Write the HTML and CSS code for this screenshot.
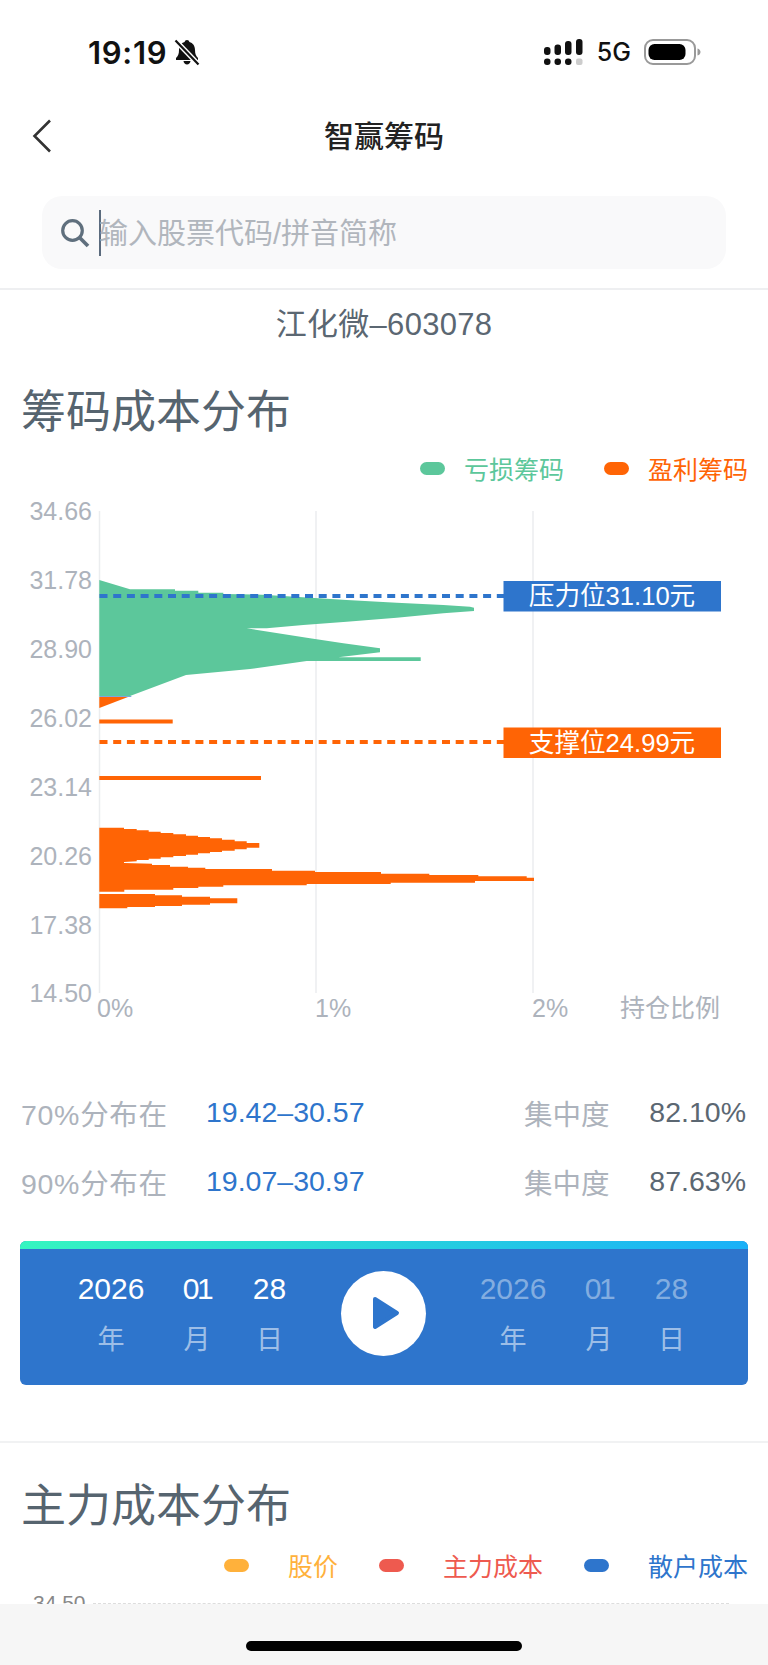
FILE: index.html
```html
<!DOCTYPE html>
<html lang="zh-CN">
<head>
    <meta charset="UTF-8">
    <meta name="viewport" content="width=device-width, initial-scale=1.0">
    <title>智赢筹码</title>
    <link rel="stylesheet" href="styles.css">
</head>
<body>
    <div class="status-bar">
        <div class="status-left">
            <span class="clock">19:19</span>
            <svg class="bell" width="26" height="27" viewBox="0 0 26 27">
                <path d="M13 1c1.3 0 2.2.9 2.4 2.1 3.6 1 5.6 4 5.6 7.9 0 4 1 6 3 8v2H2v-2c2-2 3-4 3-8 0-3.900 2-6.900 5.600-7.900C10.800 1.900 11.700 1 13 1z" fill="#111"/>
                <path d="M9.500 22h7c-.3 2-1.700 3.500-3.500 3.500S9.800 24 9.500 22z" fill="#111"/>
                <path d="M2 2l22 23" stroke="#fff" stroke-width="5"/>
                <path d="M1.500 1.500l23 24" stroke="#111" stroke-width="2.200"/>
            </svg>
        </div>
        <div class="status-right">
            <svg width="40" height="28" viewBox="0 0 40 28">
                <rect x="1" y="9" width="6.500" height="8" rx="3" fill="#111"/>
                <rect x="11.500" y="6.500" width="6.500" height="10.500" rx="3" fill="#111"/>
                <rect x="22" y="3" width="6.500" height="14" rx="3" fill="#111"/>
                <rect x="33" y="1" width="6.500" height="16" rx="3" fill="#111"/>
                <rect x="1" y="20.500" width="6.500" height="6.500" rx="3" fill="#111"/>
                <rect x="11.500" y="20.500" width="6.500" height="6.500" rx="3" fill="#111"/>
                <rect x="22" y="20.500" width="6.500" height="6.500" rx="3" fill="#111"/>
                <rect x="33" y="20.500" width="6.500" height="6.500" rx="2" fill="#ccc"/>
            </svg>
            <span class="network">5G</span>
            <svg width="57" height="26" viewBox="0 0 57 26">
                <rect x="1" y="1" width="50" height="24" rx="8" fill="none" stroke="#999" stroke-width="2"/>
                <rect x="4.500" y="5" width="37" height="16" rx="6" fill="#000"/>
                <path d="M53.500 9.500c2 .5 3 2 3 3.500s-1 3-3 3.500z" fill="#999"/>
            </svg>
        </div>
    </div>

    <div class="nav-bar">
        <svg class="back" width="20" height="34" viewBox="0 0 20 34">
            <path d="M18 1.500L2.500 17 18 32.500" fill="none" stroke="#333" stroke-width="2.600"/>
        </svg>
        <h1>智赢筹码</h1>
    </div>

    <div class="search-wrap">
        <div class="search-box">
            <svg class="search-icon" width="30" height="30" viewBox="0 0 30 30">
                <circle cx="12.500" cy="12.500" r="9.800" fill="none" stroke="#5f6f7d" stroke-width="3.200"/>
                <path d="M20 20l8 8" stroke="#5f6f7d" stroke-width="3.800"/>
            </svg>
            <span class="cursor"></span>
            <span class="placeholder">输入股票代码/拼音简称</span>
        </div>
    </div>

    <div class="content">
        <div class="stock-name">江化微–603078</div>

        <h2 class="section-title">筹码成本分布</h2>
        <div class="legend legend-chips">
            <span class="swatch green-bg"></span><span class="green-text">亏损筹码</span>
            <span class="swatch orange-bg"></span><span class="orange-text">盈利筹码</span>
        </div>

        <svg class="chip-chart" width="768" height="540" viewBox="0 490 768 540">
            <line class="grid" x1="99.500" y1="511" x2="99.500" y2="993"/>
            <line class="grid" x1="316" y1="511" x2="316" y2="993"/>
            <line class="grid" x1="533" y1="511" x2="533" y2="993"/>

            <text class="tick" x="92" y="520">34.66</text>
            <text class="tick" x="92" y="589">31.78</text>
            <text class="tick" x="92" y="658">28.90</text>
            <text class="tick" x="92" y="727">26.02</text>
            <text class="tick" x="92" y="796">23.14</text>
            <text class="tick" x="92" y="865">20.26</text>
            <text class="tick" x="92" y="933.500">17.38</text>
            <text class="tick" x="92" y="1002">14.50</text>

            <text class="tick-x" x="97" y="1017">0%</text>
            <text class="tick-x" x="315" y="1017">1%</text>
            <text class="tick-x" x="532" y="1017">2%</text>
            <text class="tick" x="720" y="1017">持仓比例</text>

            <!-- 亏损 -->
            <polygon class="green-fill" points="99.300,580 130,589.300 175,589.300 175,590.700 198.300,590.700 198.300,592.700 223.300,592.700 223.300,594 263,594.700 303,597.300 346.700,600 396.700,602.700 443.300,605 470,606.700 474,607.700 474,611 443.300,613.300 396.700,617.700 346.700,621.700 303.300,625 266.700,628.300 246.700,628.300 310,638.300 343.300,643.300 380,648.300 380,652.300 338.300,657.300 420.700,657.300 420.700,661 306.700,661 250,669 186,675 130,696 99.300,696"/>
            <rect x="99.300" y="696" width="32" height="1" fill="#7fa6dd"/>

            <!-- 盈利 -->
            <polygon class="orange-fill" points="99.300,697 128,697 99.300,708"/>
            <rect class="orange-fill" x="99.300" y="719.500" width="73.400" height="4"/>
            <rect class="orange-fill" x="99.300" y="776" width="161.700" height="4"/>
            <polygon class="orange-fill" points="99.300,827.700 124,827.700 124,829 136.700,829 136.700,830.300 148.700,830.300 148.700,831.700 160.700,831.700 160.700,833 173.300,833 173.300,834.300 186,834.300 186,835.700 198,835.700 198,837 210,837 210,838.300 222,838.300 222,839.700 234.700,839.700 234.700,841.300 246.700,841.300 246.700,843 259.300,843 259.300,847.700 246.700,847.700 246.700,849.300 234.700,849.300 234.700,850.700 222,850.700 222,852 210,852 210,853.300 198,853.300 198,854.700 186,854.700 186,856 173.300,856 173.300,857.300 160.700,857.300 160.700,858.700 148.700,858.700 148.700,860 136.700,860 136.700,861.300 124,862 124,863 152,863.700 152,865 170,865 170,866.700 188,866.700 188,867.700 205.300,867.700 205.300,869 272,869 272,870.700 315,870.700 315,872 381,872 381,873.700 429.300,873.700 429.300,875 478.300,875 478.300,876.300 526.700,876.300 526.700,877.700 534,877.700 534,881 475,881 475,882.700 390.700,882.700 390.700,884 306.700,884 306.700,885.300 223.300,885.300 223.300,886.700 198.300,886.700 198.300,888 173.300,888 173.300,889.700 124.300,889.700 124.300,891.700 99.300,891.700"/>
            <polygon class="orange-fill" points="99.300,894 155,894 155,895.300 182,895.300 182,896.700 210,896.700 210,898.300 237.300,898.300 237.300,903.300 210,903.300 210,904.700 182,904.700 182,906 155,906 155,907 127.300,907 127.300,908.300 99.300,908.300"/>

            <!-- 压力位 / 支撑位 -->
            <line class="dash dash-blue" x1="99.500" y1="596" x2="504" y2="596"/>
            <rect class="blue-fill" x="503.500" y="581" width="217.500" height="30.500"/>
            <text class="mark" x="612" y="605">压力位31.10元</text>
            <line class="dash dash-orange" x1="99.500" y1="742" x2="504" y2="742"/>
            <rect class="orange-fill" x="503.500" y="727.500" width="217.500" height="30.500"/>
            <text class="mark" x="612" y="751.500">支撑位24.99元</text>
        </svg>

        <div class="stats">
            <div class="stat-row">
                <span class="stat-label stat-dist">70%分布在</span>
                <span class="stat-range">19.42–30.57</span>
                <span class="stat-label stat-name">集中度</span>
                <span class="stat-value">82.10%</span>
            </div>
            <div class="stat-row">
                <span class="stat-label stat-dist">90%分布在</span>
                <span class="stat-range">19.07–30.97</span>
                <span class="stat-label stat-name">集中度</span>
                <span class="stat-value">87.63%</span>
            </div>
        </div>

        <div class="player">
            <div class="player-strip"></div>
            <div class="player-body">
                <div class="date-group">
                    <span class="num">2026</span><span class="num month">01</span><span class="num">28</span>
                    <span class="unit">年</span><span class="unit">月</span><span class="unit">日</span>
                </div>
                <div class="play-btn">
                    <svg width="28" height="34" viewBox="0 0 28 34">
                        <path d="M3 3l22 14L3 31z" fill="#2e75cc" stroke="#2e75cc" stroke-width="4" stroke-linejoin="round"/>
                    </svg>
                </div>
                <div class="date-group date-end">
                    <span class="num">2026</span><span class="num month">01</span><span class="num">28</span>
                    <span class="unit">年</span><span class="unit">月</span><span class="unit">日</span>
                </div>
            </div>
        </div>

        <div class="section-line"></div>

        <h2 class="section-title title-main">主力成本分布</h2>
        <div class="legend legend-main">
            <span class="swatch yellow-bg"></span><span class="yellow-text">股价</span>
            <span class="swatch red-bg"></span><span class="red-text">主力成本</span>
            <span class="swatch blue-bg"></span><span class="blue-text">散户成本</span>
        </div>
        <div class="main-chart-top">
            <span class="main-tick">34.50</span>
            <span class="main-line"></span>
        </div>
    </div>

    <div class="home-bar"><span class="home-indicator"></span></div>
</body>
</html>
```

FILE: styles.css
```css
* {
    box-sizing: border-box;
}

html, body {
    margin: 0;
    padding: 0;
}

body {
    width: 768px;
    height: 1665px;
    overflow: hidden;
    background: #fff;
    display: flex;
    flex-direction: column;
    font-family: "Liberation Sans", "Noto Sans CJK SC", sans-serif;
}

h1, h2 {
    margin: 0;
    font-weight: normal;
}

/* 状态栏 */
.status-bar {
    height: 104px;
    flex: none;
    display: flex;
    justify-content: space-between;
    align-items: center;
    padding: 0 67px 0 88px;
}

.status-left, .status-right {
    display: flex;
    align-items: center;
}

.clock {
    font-family: Inter, sans-serif;
    font-size: 31px;
    font-weight: 600;
    color: #111;
    letter-spacing: 0.7px;
}

.bell {
    margin-left: 7px;
}

.network {
    font-family: Inter, sans-serif;
    font-size: 25px;
    font-weight: 500;
    color: #111;
    margin: 0 13px 0 14px;
}

/* 导航 */
.nav-bar {
    height: 64px;
    flex: none;
    position: relative;
    display: flex;
    align-items: center;
    justify-content: center;
    padding-bottom: 4px;
}

.nav-bar h1 {
    font-size: 30px;
    font-weight: 500;
    color: #222;
}

.back {
    position: absolute;
    left: 32px;
    top: 15px;
}

/* 搜索 */
.search-wrap {
    flex: none;
    height: 122px;
    padding: 28px 42px 0;
    border-bottom: 2px solid #eeeff1;
}

.search-box {
    height: 73px;
    background: #f9f9fa;
    border-radius: 20px;
    display: flex;
    align-items: center;
    padding-left: 18px;
}

.cursor {
    width: 2px;
    height: 46px;
    background: #5b6b7d;
    margin-left: 9px;
    margin-right: -2px;
}

.placeholder {
    font-size: 29px;
    color: #b1b6bd;
    padding-bottom: 4px;
}

/* 内容 */
.content {
    flex: 1;
    min-height: 0;
    overflow: hidden;
}

.stock-name {
    height: 70px;
    line-height: 70px;
    text-align: center;
    font-size: 31px;
    letter-spacing: 0.3px;
    color: #5b6772;
}

.section-title {
    font-size: 45px;
    line-height: 60px;
    color: #56646f;
    margin: 23px 0 0 21px;
}

.legend {
    display: flex;
    justify-content: flex-end;
    align-items: center;
    height: 36px;
    font-size: 25px;
    padding-right: 20px;
}

.legend-chips {
    margin-top: 7px;
}

.legend-chips .swatch {
    margin-right: 19px;
}

.legend-chips .swatch + span + .swatch {
    margin-left: 40px;
}

.swatch {
    width: 25px;
    height: 13px;
    border-radius: 7px;
}

.green-bg { background: #5cc79b; }
.orange-bg { background: #ff6405; }
.yellow-bg { background: #ffb13b; }
.red-bg { background: #ee5a4f; }
.blue-bg { background: #2e75cc; }
.green-text { color: #5cc79b; }
.orange-text { color: #ff6405; }
.yellow-text { color: #ffb13b; }
.red-text { color: #ee5a4f; }
.blue-text { color: #2e75cc; }

/* 图表 */
.chip-chart {
    display: block;
    margin-top: 4px;
}

.grid {
    stroke: #ebedef;
    stroke-width: 1.500;
}

.tick, .tick-x {
    font-size: 25px;
    fill: #adb3bc;
}

.tick {
    text-anchor: end;
}

.green-fill { fill: #5cc79b; }
.orange-fill { fill: #ff6405; }
.blue-fill { fill: #2e75cc; }

.dash {
    stroke-width: 4;
    stroke-dasharray: 8 5.700;
}

.dash-blue { stroke: #2e75cc; }
.dash-orange { stroke: #ff6405; }

.mark {
    font-size: 25.600px;
    fill: #fff;
    text-anchor: middle;
}

/* 分布 */
.stats {
    margin-top: 49px;
    padding: 0 22px 0 21px;
}

.stat-row {
    height: 69px;
    display: flex;
    align-items: center;
    font-size: 28.500px;
    padding-bottom: 3px;
}

.stat-label {
    color: #adb3bc;
    width: 185px;
}

.stat-dist {
    letter-spacing: 0.7px;
}

.stat-range {
    color: #2e75cc;
    width: 318px;
}

.stat-name {
    width: 90px;
}

.stat-value {
    color: #5b6772;
    flex: 1;
    text-align: right;
}

/* 播放 */
.player {
    margin: 24px 20px 0 20px;
    height: 144px;
    border-radius: 6px;
    overflow: hidden;
    background: #2e75cc;
}

.player-strip {
    height: 8px;
    background: linear-gradient(90deg, #35f5c0, #1ab0f8);
}

.player-body {
    display: flex;
    align-items: center;
    padding-left: 36px;
    height: 128px;
}

.date-group {
    display: grid;
    grid-template-columns: 110px 62px 83px;
    grid-auto-rows: 49px;
    align-items: center;
    justify-items: center;
    color: #fff;
}

.num {
    font-size: 30px;
}

.month {
    letter-spacing: -2.500px;
}

.unit {
    font-size: 27px;
    color: rgba(255, 255, 255, 0.55);
}

.date-end .num {
    color: rgba(255, 255, 255, 0.42);
}

.play-btn {
    width: 85px;
    height: 85px;
    margin: 0 32px 0 30px;
    border-radius: 50%;
    background: #fff;
    display: flex;
    align-items: center;
    justify-content: center;
    padding-left: 5px;
}

.section-line {
    height: 2px;
    margin-top: 56px;
    background: #f1f2f3;
}

.title-main {
    margin-top: 34px;
}

.legend-main {
    margin-top: 10px;
}

.legend-main .swatch {
    margin-right: 39px;
}

.legend-main .swatch + span + .swatch {
    margin-left: 41px;
}

.main-chart-top {
    display: flex;
    align-items: center;
    padding: 0 39px 0 33px;
    margin-top: 8px;
}

.main-tick {
    font-size: 21px;
    color: #888;
    margin-right: 7px;
}

.main-line {
    flex: 1;
    border-top: 1px dashed #ddd;
}

/* 底部 */
.home-bar {
    flex: none;
    height: 61px;
    background: #f6f6f6;
    display: flex;
    justify-content: center;
    padding-top: 37px;
}

.home-indicator {
    width: 276px;
    height: 10px;
    border-radius: 5px;
    background: #000;
}
```
